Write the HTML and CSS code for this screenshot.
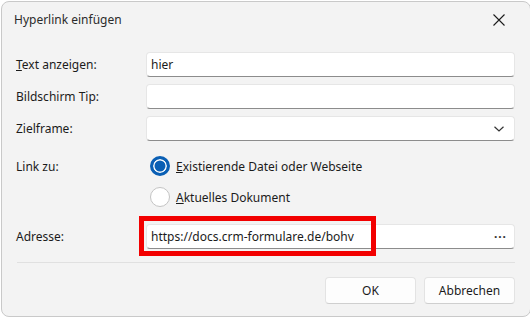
FILE: index.html
```html
<!DOCTYPE html>
<html lang="de">
<head>
    <meta charset="UTF-8">
    <title>Hyperlink einfügen</title>
    <link rel="stylesheet" href="styles.css">
</head>
<body>
    <div class="dialog">
        <div class="titlebar">
            <span class="title">Hyperlink einfügen</span>
            <svg class="close" width="14" height="14" viewBox="0 0 14 14">
                <path d="M1.5 1.5 L12.5 12.5 M12.5 1.5 L1.5 12.5" stroke="#1b1b1b" stroke-width="1.1" fill="none"/>
            </svg>
        </div>

        <div class="form">
            <div class="row">
                <label><u>T</u>ext anzeigen:</label>
                <div class="field">hier</div>
            </div>
            <div class="row">
                <label>Bildschirm Tip:</label>
                <div class="field"></div>
            </div>
            <div class="row">
                <label>Zielframe:</label>
                <div class="field select">
                    <svg width="12" height="8" viewBox="0 0 12 8">
                        <path d="M1.5 1.8 L6 6 L10.5 1.8" stroke="#333" stroke-width="1.2" fill="none"/>
                    </svg>
                </div>
            </div>

            <div class="row link-row">
                <label>Link zu:</label>
                <div class="options">
                    <div class="option">
                        <span class="radio checked"></span>
                        <span><u>E</u>xistierende Datei oder Webseite</span>
                    </div>
                    <div class="option">
                        <span class="radio"></span>
                        <span><u>A</u>ktuelles Dokument</span>
                    </div>
                </div>
            </div>

            <div class="row address-row">
                <label>Adresse:</label>
                <div class="field address">
                    <span>https://docs.crm-formulare.de/bohv</span>
                    <span class="dots">···</span>
                    <div class="highlight"></div>
                </div>
            </div>

            <div class="separator"></div>

            <div class="buttons">
                <button class="btn ok">OK</button>
                <button class="btn">Abbrechen</button>
            </div>
        </div>
    </div>
</body>
</html>
```

FILE: styles.css
```css
body {
    margin: 0;
    background: #ffffff;
    font-family: "Noto Sans", "Open Sans", sans-serif;
    font-size: 12px;
    color: #1b1b1b;
}

.dialog {
    box-sizing: border-box;
    margin: 1px 0 0 1px;
    width: 530px;
    height: 316px;
    background: #f3f3f3;
    border: 1px solid #c9c9c9;
    border-radius: 8px;
}

.titlebar {
    height: 35px;
    display: flex;
    align-items: center;
    justify-content: space-between;
    padding: 0 24px 0 12px;
}

.title {
    color: #2b2b2b;
}

.form {
    padding: 15px 15px 0 14px;
}

.row {
    display: grid;
    grid-template-columns: 130px 1fr;
    align-items: center;
    margin-bottom: 7px;
}

label {
    color: #1b1b1b;
}

.field {
    box-sizing: border-box;
    height: 25px;
    background: #ffffff;
    border: 1px solid #e6e6e6;
    border-bottom-color: #8c8c8c;
    border-radius: 4px;
    padding: 0 4px;
    display: flex;
    align-items: center;
}

.select {
    justify-content: flex-end;
    padding-right: 9px;
}

.link-row {
    margin-top: 13px;
    margin-bottom: 15px;
    align-items: start;
}

.link-row label {
    margin-top: 4px;
}

.options {
    display: flex;
    flex-direction: column;
    gap: 7px;
}

.option {
    height: 24px;
    display: flex;
    align-items: center;
    gap: 6px;
    padding-left: 4px;
}

.radio {
    box-sizing: border-box;
    width: 20px;
    height: 20px;
    border-radius: 50%;
    background: #ffffff;
    border: 1px solid #c4c4c4;
}

.radio.checked {
    border: 3px solid #0a5fb4;
    background: #0a5fb4;
    box-shadow: inset 0 0 0 1.5px #ffffff;
}

.address-row {
    margin-bottom: 13px;
}

.address {
    position: relative;
    justify-content: space-between;
    padding-right: 7px;
}

.dots {
    color: #333;
    letter-spacing: 1px;
    font-weight: bold;
}

.highlight {
    position: absolute;
    left: -8px;
    top: -9px;
    width: 237px;
    height: 40px;
    box-sizing: border-box;
    border: 5px solid #f20000;
}

.separator {
    height: 1px;
    background: #e0e0e0;
    margin-left: 1px;
}

.buttons {
    display: flex;
    justify-content: flex-end;
    gap: 8px;
    margin-top: 14px;
}

.btn {
    box-sizing: border-box;
    height: 27px;
    width: 91px;
    background: #fdfdfd;
    border: 1px solid #e3e3e3;
    border-bottom-color: #cfcfcf;
    border-radius: 4px;
    font-family: inherit;
    font-size: 12px;
    color: #1b1b1b;
}
```
